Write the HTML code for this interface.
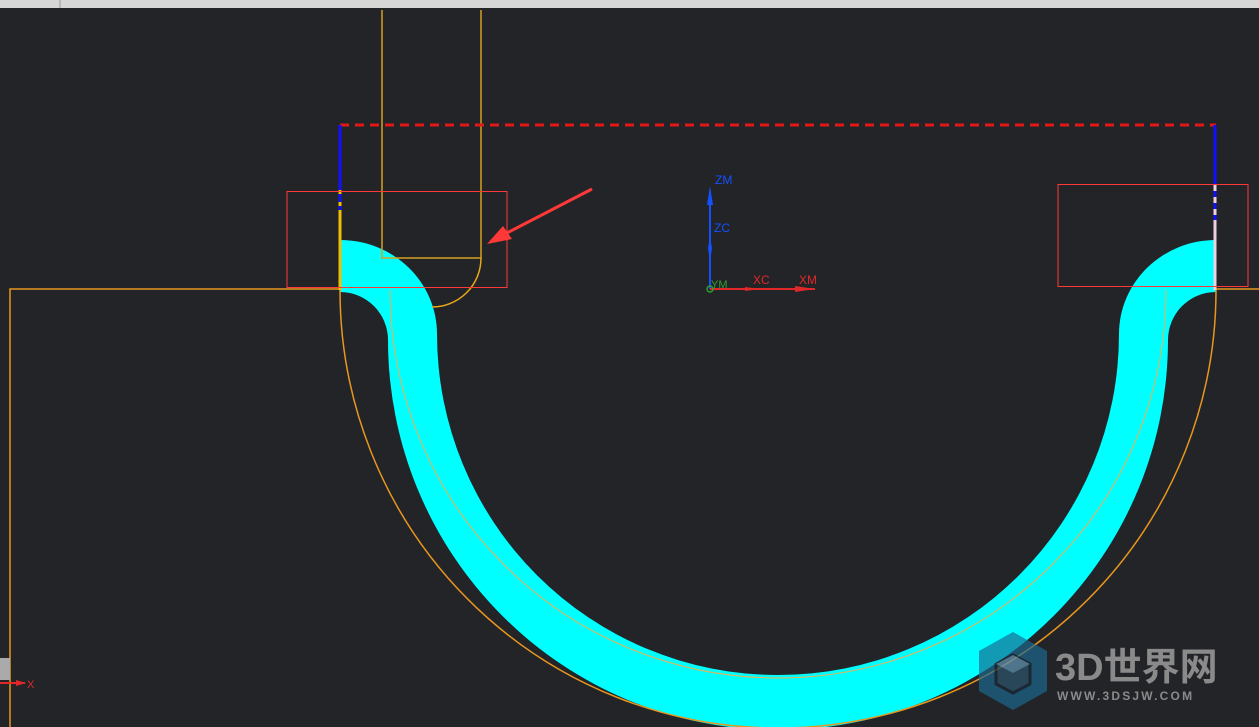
<!DOCTYPE html>
<html><head><meta charset="utf-8"><style>
html,body{margin:0;padding:0;background:#232428;width:1259px;height:727px;overflow:hidden}
svg{display:block}
</style></head><body>
<svg width="1259" height="727" viewBox="0 0 1259 727" xmlns="http://www.w3.org/2000/svg" font-family="Liberation Sans, sans-serif">
<rect width="1259" height="727" fill="#232428"/>
<rect width="1259" height="8" fill="#d6d6d6"/>
<line x1="60" y1="0" x2="60" y2="8" stroke="#999"/>
<!-- cyan shape -->
<path fill="#00ffff" d="M340 240 A97 94 0 0 1 437 334 A341 341 0 0 0 1119 334 A97 94 0 0 1 1216 240 L1216 292 A48 48 0 0 0 1168 340 A390 390 0 0 1 388 340 A48 48 0 0 0 340 292 Z"/>
<!-- orange lines -->
<polyline points="10,727 10,289 340,289" fill="none" stroke="#e8961e" stroke-width="1.5"/>
<line x1="1216" y1="289" x2="1259" y2="289" stroke="#e8961e" stroke-width="1.5"/>
<path d="M340 290 A438 438 0 0 0 1216 290" fill="none" stroke="#e8961e" stroke-width="1.5"/>
<path d="M390 290 A388 388 0 0 0 1166 290" fill="none" stroke="#f0b050" stroke-width="1"/>
<!-- tool -->
<path d="M382 10 L382 258 L481 258 L481 10" fill="none" stroke="#d4a020" stroke-width="1.5"/>
<path d="M481 258 A49 49 0 0 1 432 307" fill="none" stroke="#e8a818" stroke-width="1.5"/>
<!-- dashed red top -->
<line x1="340" y1="125" x2="1216" y2="125" stroke="#e01818" stroke-width="3" stroke-dasharray="9,6"/>
<line x1="340" y1="125" x2="340" y2="240" stroke="#1010ff" stroke-width="3"/>
<line x1="340" y1="190" x2="340" y2="240" stroke="#f0c000" stroke-width="3" stroke-dasharray="4,8"/>
<line x1="340" y1="210" x2="340" y2="290" stroke="#f0c000" stroke-width="3"/>
<line x1="1215" y1="125" x2="1215" y2="240" stroke="#1010ff" stroke-width="3"/>
<line x1="1215" y1="185" x2="1215" y2="290" stroke="#f0d0e0" stroke-width="3" stroke-dasharray="6,6"/>
<line x1="1215" y1="220" x2="1215" y2="290" stroke="#f0d0e0" stroke-width="3"/>
<!-- red rectangles -->
<rect x="287" y="191.5" width="220" height="96" fill="none" stroke="#ff3838" stroke-width="1"/>
<rect x="1058" y="184.5" width="190" height="102" fill="none" stroke="#ff3838" stroke-width="1"/>
<!-- arrow -->
<line x1="592" y1="189" x2="505" y2="234" stroke="#ff3838" stroke-width="3"/>
<polygon points="487,244 503,226 512,239" fill="#ff3838"/>
<!-- axes -->
<line x1="710" y1="289" x2="710" y2="195" stroke="#1450ff" stroke-width="2"/>
<polygon points="707,205 710,186 713,205" fill="#1450ff"/>
<polygon points="708,248 710,237 712,248 710,262" fill="#1450ff"/>
<line x1="710" y1="289" x2="815" y2="289" stroke="#e02828" stroke-width="2"/>
<polygon points="795,286 815,289 795,292" fill="#e02828"/>
<polygon points="745,287 760,289 745,291" fill="#e02828"/>
<circle cx="710" cy="289" r="3" fill="none" stroke="#2fa030" stroke-width="1.5"/>
<text x="715" y="184" fill="#1450ff" font-size="12">ZM</text>
<text x="714" y="232" fill="#1450ff" font-size="12">ZC</text>
<text x="711" y="288" fill="#2fa030" font-size="11">YM</text>
<text x="753" y="284" fill="#e02828" font-size="12">XC</text>
<text x="799" y="284" fill="#e02828" font-size="12">XM</text>
<!-- bottom-left marker -->
<rect x="0" y="658" width="10" height="22" fill="#aaa"/>
<line x1="0" y1="683" x2="25" y2="683" stroke="#e02828" stroke-width="2"/>
<polygon points="16,680 26,683 16,686" fill="#e02828"/>
<text x="27" y="688" fill="#e02828" font-size="11">X</text>
<!-- logo -->
<g opacity="0.8">
<polygon points="1013,632 1047,651 1047,691 1013,710 979,691 979,651" fill="#1b6a90" opacity="0.85"/>
<polygon points="1013,655 1030,664 1030,684 1013,693 996,684 996,664" fill="#2c4f66" stroke="#1a2a36" stroke-width="3"/>
<polygon points="1013,655 1030,664 1013,673 996,664" fill="#5a8aa6"/>
</g>
<text x="1055" y="680" fill="#8a8a8a" font-size="38" font-weight="bold" font-family="Liberation Sans, Noto Sans CJK SC, sans-serif">3D世界网</text>
<text x="1057" y="700" fill="#8a8a8a" font-size="12" font-weight="bold" letter-spacing="2.2">WWW.3DSJW.COM</text>
</svg>
</body></html>
